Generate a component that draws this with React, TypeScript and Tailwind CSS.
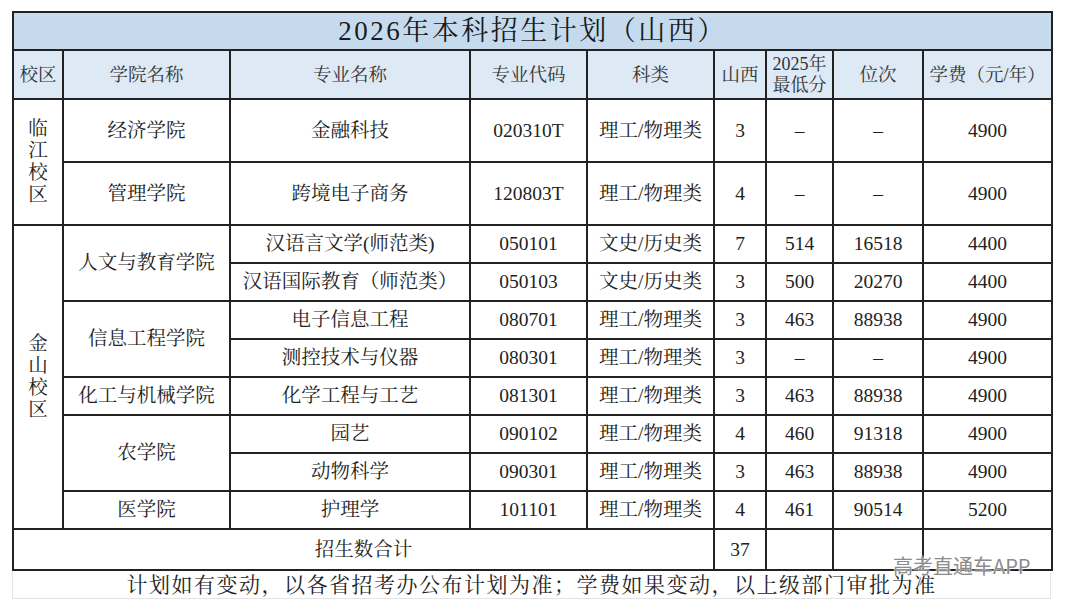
import React from "react";

const F = "font-['Liberation_Serif','Noto_Serif_CJK_SC','Noto_Sans_CJK_SC',serif]";
const cell = "border-2 border-[#222] text-center align-middle p-0 text-[19.5px] text-[#222]";

type Row = {
  campus?: { name: string; span: number };
  college?: { name: string; span: number };
  major: string;
  code: string;
  kind: string;
  n: string;
  min: string;
  rank: string;
  fee: string;
  h: string;
};

const rows: Row[] = [
  { campus: { name: "临江校区", span: 2 }, college: { name: "经济学院", span: 1 }, major: "金融科技", code: "020310T", kind: "理工/物理类", n: "3", min: "–", rank: "–", fee: "4900", h: "h-[63px]" },
  { college: { name: "管理学院", span: 1 }, major: "跨境电子商务", code: "120803T", kind: "理工/物理类", n: "4", min: "–", rank: "–", fee: "4900", h: "h-[63px]" },
  { campus: { name: "金山校区", span: 8 }, college: { name: "人文与教育学院", span: 2 }, major: "汉语言文学(师范类)", code: "050101", kind: "文史/历史类", n: "7", min: "514", rank: "16518", fee: "4400", h: "h-[38px]" },
  { major: "汉语国际教育（师范类）", code: "050103", kind: "文史/历史类", n: "3", min: "500", rank: "20270", fee: "4400", h: "h-[38px]" },
  { college: { name: "信息工程学院", span: 2 }, major: "电子信息工程", code: "080701", kind: "理工/物理类", n: "3", min: "463", rank: "88938", fee: "4900", h: "h-[38px]" },
  { major: "测控技术与仪器", code: "080301", kind: "理工/物理类", n: "3", min: "–", rank: "–", fee: "4900", h: "h-[38px]" },
  { college: { name: "化工与机械学院", span: 1 }, major: "化学工程与工艺", code: "081301", kind: "理工/物理类", n: "3", min: "463", rank: "88938", fee: "4900", h: "h-[38px]" },
  { college: { name: "农学院", span: 2 }, major: "园艺", code: "090102", kind: "理工/物理类", n: "4", min: "460", rank: "91318", fee: "4900", h: "h-[38px]" },
  { major: "动物科学", code: "090301", kind: "理工/物理类", n: "3", min: "463", rank: "88938", fee: "4900", h: "h-[38px]" },
  { college: { name: "医学院", span: 1 }, major: "护理学", code: "101101", kind: "理工/物理类", n: "4", min: "461", rank: "90514", fee: "5200", h: "h-[38px]" },
];

function Vertical({ text }: { text: string }) {
  return (
    <div className="flex flex-col items-center leading-[22px]">
      {text.split("").map((c, i) => (
        <span key={i}>{c}</span>
      ))}
    </div>
  );
}

export default function App() {
  return (
    <div className={`relative w-[1080px] h-[609px] bg-white overflow-hidden ${F}`}>
      <div className="pl-[12px] pt-[11px]">
        <table className="border-collapse table-fixed w-[1039px]">
          <colgroup>
            <col className="w-[50px]" />
            <col className="w-[167px]" />
            <col className="w-[240px]" />
            <col className="w-[117px]" />
            <col className="w-[127px]" />
            <col className="w-[52px]" />
            <col className="w-[67px]" />
            <col className="w-[90px]" />
            <col className="w-[129px]" />
          </colgroup>
          <tbody>
            <tr className="h-[38px] bg-[#c6daee]">
              <td colSpan={9} className="border-2 border-[#222] text-center align-middle p-0 text-[27px] leading-[30px] tracking-[2.5px] text-[#1a1a1a]">
                2026年本科招生计划（山西）
              </td>
            </tr>
            <tr className="h-[49px] bg-[#dde9f5]">
              {["校区", "学院名称", "专业名称", "专业代码", "科类", "山西"].map((t) => (
                <td key={t} className="border-2 border-[#222] text-center align-middle p-0 text-[18.5px] leading-[22px] text-[#333]">
                  {t}
                </td>
              ))}
              <td className="border-2 border-[#222] text-center align-middle p-0 text-[18px] leading-[21px] text-[#333]">
                2025年
                <br />
                最低分
              </td>
              <td className="border-2 border-[#222] text-center align-middle p-0 text-[18.5px] leading-[22px] text-[#333]">位次</td>
              <td className="border-2 border-[#222] text-center align-middle p-0 text-[18.5px] leading-[22px] text-[#333]">学费（元/年）</td>
            </tr>
            {rows.map((r, i) => (
              <tr key={i} className={r.h}>
                {r.campus && (
                  <td rowSpan={r.campus.span} className={cell}>
                    <Vertical text={r.campus.name} />
                  </td>
                )}
                {r.college && (
                  <td rowSpan={r.college.span} className={cell}>
                    {r.college.name}
                  </td>
                )}
                <td className={cell}>{r.major}</td>
                <td className={cell}>{r.code}</td>
                <td className={cell}>{r.kind}</td>
                <td className={cell}>{r.n}</td>
                <td className={cell}>{r.min}</td>
                <td className={cell}>{r.rank}</td>
                <td className={cell}>{r.fee}</td>
              </tr>
            ))}
            <tr className="h-[41px]">
              <td colSpan={5} className={cell}>招生数合计</td>
              <td className={cell}>37</td>
              <td className={cell}></td>
              <td className={cell}></td>
              <td className={cell}></td>
            </tr>
          </tbody>
        </table>
        <div className="w-[1039px] h-[28px] border-x border-b border-[#e4e4e4] flex items-center justify-center text-[21px] tracking-[1.5px] text-[#222] leading-none pt-[2px]">
          计划如有变动，以各省招考办公布计划为准；学费如果变动，以上级部门审批为准
        </div>
      </div>
      <div className="absolute left-[893px] top-[554px] text-[20px] leading-[24px] text-[#8c8c8c] font-['Noto_Sans_CJK_SC',sans-serif] [text-shadow:0_0_2px_#fff,0_0_2px_#fff]">
        高考直通车APP
      </div>
    </div>
  );
}
